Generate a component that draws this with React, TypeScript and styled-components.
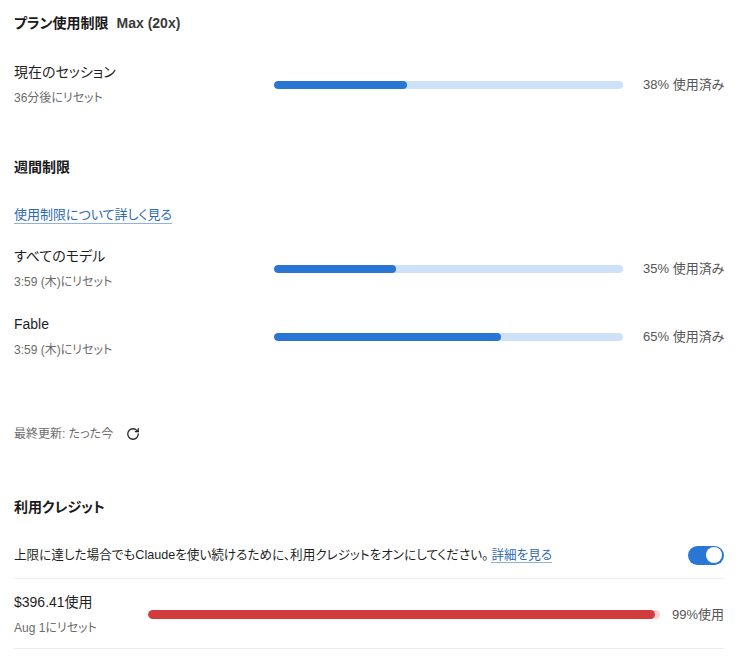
import React from 'react';
import styled, { createGlobalStyle } from 'styled-components';
import { RotateCw } from 'lucide-react';

interface Meter {
  label: string;
  reset: string;
  percent: number;
}

const sessionMeters: Meter[] = [
  { label: '現在のセッション', reset: '36分後にリセット', percent: 38 },
];

const weeklyMeters: Meter[] = [
  { label: 'すべてのモデル', reset: '3:59 (木)にリセット', percent: 35 },
  { label: 'Fable', reset: '3:59 (木)にリセット', percent: 65 },
];

const GlobalStyle = createGlobalStyle`
  body {
    margin: 0;
    background: #ffffff;
    font-family: "Liberation Sans", "Noto Sans CJK JP", sans-serif;
    font-feature-settings: "palt";
    color: #1f1f1f;
  }
`;

const UsageRow: React.FC<{ meter: Meter }> = ({ meter }) => (
  <Row>
    <RowText>
      <Label>{meter.label}</Label>
      <Sub>{meter.reset}</Sub>
    </RowText>
    <Track>
      <Fill style={{ width: `${meter.percent}%` }} />
    </Track>
    <Percent>{meter.percent}% 使用済み</Percent>
  </Row>
);

const App: React.FC = () => {
  return (
    <>
      <GlobalStyle />
      <Page>
        <Title>
          プラン使用制限<Plan>Max (20x)</Plan>
        </Title>
        <Meters>
          {sessionMeters.map((m) => (
            <UsageRow meter={m} key={m.label} />
          ))}
        </Meters>

        <SectionTitle>週間制限</SectionTitle>
        <LearnMore href="#">使用制限について詳しく見る</LearnMore>
        <Meters>
          {weeklyMeters.map((m) => (
            <UsageRow meter={m} key={m.label} />
          ))}
        </Meters>

        <Updated>
          最終更新: たった今
          <RefreshButton aria-label="更新">
            <RotateCw size={14} strokeWidth={2.2} />
          </RefreshButton>
        </Updated>

        <CreditTitle>利用クレジット</CreditTitle>
        <ToggleRow>
          <Notice>
            上限に達した場合でもClaudeを使い続けるために、利用クレジットをオンにしてください。
            <InlineLink href="#">詳細を見る</InlineLink>
          </Notice>
          <Switch aria-checked="true" role="switch">
            <Knob />
          </Switch>
        </ToggleRow>
        <CreditRow>
          <RowText>
            <Label>$396.41使用</Label>
            <Sub>Aug 1にリセット</Sub>
          </RowText>
          <CreditTrack>
            <CreditFill style={{ width: '99%' }} />
          </CreditTrack>
          <Percent>99%使用</Percent>
        </CreditRow>
      </Page>
    </>
  );
};

const Page = styled.div`
  padding: 13px 20px 0 14px;
  display: flex;
  flex-direction: column;
`;

const Title = styled.h2`
  margin: 0;
  font-size: 14px;
  line-height: 20px;
  font-weight: 700;
  color: #1a1a1a;
`;

const Plan = styled.span`
  margin-left: 8px;
  color: #3a3a3a;
`;

const SectionTitle = styled(Title)`
  margin-top: 50px;
`;

const CreditTitle = styled(Title)`
  margin-top: 53px;
`;

const Meters = styled.div`
  display: flex;
  flex-direction: column;
  gap: 23px;
  margin-top: 29px;

  ${SectionTitle} + a + & {
    margin-top: 22px;
  }
`;

const LearnMore = styled.a`
  margin-top: 26px;
  align-self: flex-start;
  font-size: 13px;
  color: #2e6ab3;
  text-decoration: none;
  border-bottom: 1px solid #8fb3df;
  line-height: 17px;
  padding-top: 3px;
`;

const Row = styled.div`
  display: grid;
  grid-template-columns: 260px 1fr 81px;
  align-items: center;
  column-gap: 20px;
`;

const RowText = styled.div`
  display: flex;
  flex-direction: column;
  gap: 7px;
`;

const Label = styled.div`
  font-size: 14px;
  line-height: 20px;
  color: #1f1f1f;
`;

const Sub = styled.div`
  font-size: 12px;
  line-height: 18px;
  color: #6b6b6b;
`;

const Track = styled.div`
  height: 8px;
  border-radius: 4px;
  background: #cde1f8;
  overflow: hidden;
  margin-left: -20px;
`;

const Fill = styled.div`
  height: 100%;
  border-radius: 4px;
  background: #2a76d4;
`;

const Percent = styled.div`
  font-size: 13px;
  line-height: 18px;
  color: #555555;
  text-align: right;
  white-space: nowrap;
`;

const Updated = styled.div`
  margin-top: 65px;
  display: flex;
  align-items: center;
  font-size: 12px;
  line-height: 20px;
  color: #6b6b6b;
`;

const RefreshButton = styled.span`
  display: inline-flex;
  margin-left: 13px;
  color: #222222;
`;

const ToggleRow = styled.div`
  margin-top: 28px;
  display: flex;
  align-items: center;
  justify-content: space-between;
  padding-bottom: 13px;
  border-bottom: 1px solid #ececec;
`;

const Notice = styled.div`
  font-size: 12.6px;
  line-height: 20px;
  color: #1f1f1f;
`;

const InlineLink = styled.a`
  margin-left: 3px;
  color: #2e6ab3;
  text-decoration: none;
  border-bottom: 1px solid #8fb3df;
`;

const Switch = styled.div`
  width: 36px;
  height: 19px;
  border-radius: 10px;
  background: #2a76d4;
  display: flex;
  align-items: center;
  justify-content: flex-end;
  padding: 0 2px;
  box-sizing: border-box;
`;

const Knob = styled.div`
  width: 16px;
  height: 16px;
  border-radius: 50%;
  background: #ffffff;
`;

const CreditRow = styled.div`
  display: grid;
  grid-template-columns: 134px 1fr auto;
  align-items: center;
  column-gap: 12px;
  padding: 13px 0 11px;
  border-bottom: 1px solid #ececec;
`;

const CreditTrack = styled.div`
  height: 9px;
  border-radius: 5px;
  background: #f8cfd0;
  overflow: hidden;
  margin-left: -12px;
`;

const CreditFill = styled.div`
  height: 100%;
  border-radius: 5px;
  background: #d13c3e;
`;

export default App;
